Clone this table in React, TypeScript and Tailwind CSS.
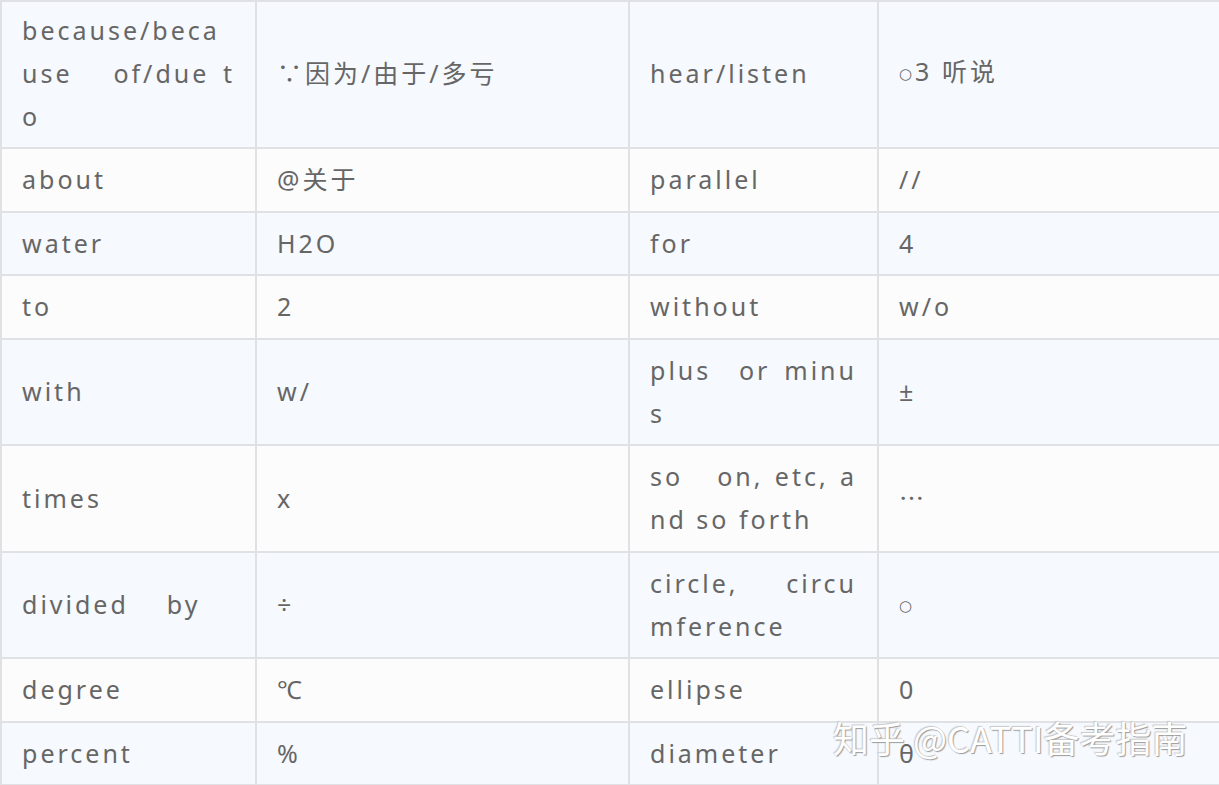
const rows: [string, string, string, string][] = [
  ['because/because   of/due to', '∵因为/由于/多亏', 'hear/listen', '○3 听说'],
  ['about', '@关于', 'parallel', '//'],
  ['water', 'H2O', 'for', '4'],
  ['to', '2', 'without', 'w/o'],
  ['with', 'w/', 'plus  or minus', '±'],
  ['times', 'x', 'so   on, etc, and so forth', '…'],
  ['divided    by', '÷', 'circle,   circumference', '○'],
  ['degree', '℃', 'ellipse', '0'],
  ['percent', '%', 'diameter', 'θ'],
];

const cell =
  'border-2 border-[#dfe1e4] px-5 py-[9.25px] align-middle text-justify break-all whitespace-pre-wrap';

function Content({ text }: { text: string }) {
  // the circle and ellipsis glyphs come out small / centred in the source
  if (text.startsWith('○')) {
    return (
      <>
        <span className="align-[2px] text-[15px]" style={{ fontFamily: '"DejaVu Sans", sans-serif' }}>
          ○
        </span>
        {text.slice(1)}
      </>
    );
  }
  if (text === '…') {
    return <span style={{ fontFamily: '"Noto Sans CJK SC", sans-serif' }}>…</span>;
  }
  return <>{text}</>;
}

export default function App() {
  return (
    <div className="relative h-[785px] w-[1219px] overflow-hidden bg-white">
      <table
        className="w-[1219px] table-fixed border-collapse text-[25px] leading-[43px] tracking-[3px] text-[#666]"
        style={{ fontFamily: '"Noto Sans", "Noto Sans CJK SC", sans-serif' }}
      >
        <colgroup>
          <col className="w-[255px]" />
          <col className="w-[373px]" />
          <col className="w-[249px]" />
          <col className="w-[342px]" />
        </colgroup>
        <tbody>
          {rows.map((r, i) => (
            <tr key={i} className={i % 2 === 0 ? 'bg-[#f6f9fd]' : 'bg-[#fcfcfc]'}>
              {r.map((t, j) => (
                <td key={j} className={i === 0 ? `${cell} pt-[6.75px]` : cell}>
                  <Content text={t} />
                </td>
              ))}
            </tr>
          ))}
        </tbody>
      </table>

      {/* watermark */}
      <div
        className="absolute left-[833px] top-[713px] text-[36px] leading-[48px] text-white"
        style={{
          fontFamily: '"Noto Sans CJK SC", "Liberation Sans", sans-serif',
          textShadow: '1px 1px 1px #9a9a9a, -1px -1px 1px #c8c8c8',
        }}
      >
        知乎 @CATTI备考指南
      </div>
    </div>
  );
}
